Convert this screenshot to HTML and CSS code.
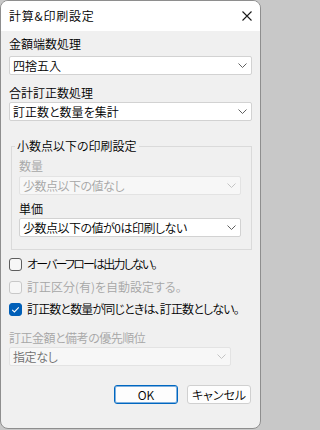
FILE: index.html
```html
<!DOCTYPE html>
<html lang="ja">
<head>
<meta charset="utf-8">
<link rel="stylesheet" href="styles.css">
</head>
<body>
<div class="window">
  <div class="titlebar">
    <span class="title">計算&amp;印刷設定</span>
    <svg class="close" width="10" height="10" viewBox="0 0 10 10"><path d="M0.5 0.5 L9.5 9.5 M9.5 0.5 L0.5 9.5" stroke="#1a1a1a" stroke-width="1.1" fill="none"/></svg>
  </div>
  <div class="content">
    <div class="label first">金額端数処理</div>
    <div class="select tight"><span>四捨五入</span><svg class="chev" width="9" height="5" viewBox="0 0 9 5"><path d="M0.5 0.5 L4.5 4.5 L8.5 0.5" stroke="#606060" stroke-width="1" fill="none"/></svg></div>
    <div class="label second">合計訂正数処理</div>
    <div class="select near"><span>訂正数と数量を集計</span><svg class="chev" width="9" height="5" viewBox="0 0 9 5"><path d="M0.5 0.5 L4.5 4.5 L8.5 0.5" stroke="#606060" stroke-width="1" fill="none"/></svg></div>

    <fieldset class="group">
      <legend>小数点以下の印刷設定</legend>
      <div class="label disabled qty">数量</div>
      <div class="select off tight2"><span class="sq1">少数点以下の値なし</span><svg class="chev" width="9" height="5" viewBox="0 0 9 5"><path d="M0.5 0.5 L4.5 4.5 L8.5 0.5" stroke="#c4c4c4" stroke-width="1" fill="none"/></svg></div>
      <div class="label price">単価</div>
      <div class="select near"><span class="sq1">少数点以下の値が0は印刷しない</span><svg class="chev" width="9" height="5" viewBox="0 0 9 5"><path d="M0.5 0.5 L4.5 4.5 L8.5 0.5" stroke="#606060" stroke-width="1" fill="none"/></svg></div>
    </fieldset>

    <div class="checks">
      <div class="check"><span class="box"></span><span class="sq3">オーバーフローは出力しない。</span></div>
      <div class="check disabled second-row"><span class="box"></span><span>訂正区分(有)を自動設定する。</span></div>
      <div class="check"><span class="box checked"><svg width="13" height="13" viewBox="0 0 13 13"><path d="M3.2 6.8 L5.4 8.9 L9.8 4.4" stroke="#ffffff" stroke-width="1.1" fill="none"/></svg></span><span class="sq2">訂正数と数量が同じときは、訂正数としない。</span></div>
    </div>

    <div class="label disabled prio"><span class="sq1">訂正金額と備考の優先順位</span></div>
    <div class="select off narrow near"><span class="dim">指定なし</span><svg class="chev" width="9" height="5" viewBox="0 0 9 5"><path d="M0.5 0.5 L4.5 4.5 L8.5 0.5" stroke="#c4c4c4" stroke-width="1" fill="none"/></svg></div>

    <div class="buttons">
      <div class="btn default">OK</div>
      <div class="btn">キャンセル</div>
    </div>
  </div>
</div>
</body>
</html>
```
FILE: styles.css
```css
html, body {
  margin: 0;
  padding: 0;
}
body {
  background: #c8c8c8;
  font-family: "Noto Sans CJK JP", "Noto Sans", sans-serif;
  font-size: 12px;
  line-height: 16px;
  font-weight: 350;
  color: #000;
  font-feature-settings: "palt";
}
.window {
  width: 261px;
  height: 429px;
  box-sizing: border-box;
  border: 1px solid #8e8e8e;
  border-radius: 8px;
  background: #f0f0f0;
  overflow: hidden;
  display: flex;
  flex-direction: column;
}
.titlebar {
  height: 30px;
  flex: none;
  background: #ffffff;
  display: flex;
  align-items: center;
  justify-content: space-between;
  padding: 0 8px 0 8px;
}
.title {
  color: #000;
  letter-spacing: 0.8px;
}
.close {
  display: block;
}
.content {
  padding: 0 8px;
  display: flex;
  flex-direction: column;
}
.label {
  height: 16px;
  white-space: nowrap;
}
.label.first { margin-top: 5px; }
.label.second { margin-top: 10px; }
.label.disabled { color: #a6a6a6; }
.label.qty { margin-top: 4px; }
.label.price { margin-top: 6px; }
.label.prio { margin-top: 10px; }

.sq1 { letter-spacing: -0.5px; }
.sq2 { letter-spacing: -0.85px; }
.sq3 { letter-spacing: -1.8px; }

.select {
  height: 19px;
  box-sizing: border-box;
  background: #ffffff;
  border: 1px solid #d2d2d2;
  border-radius: 2px;
  display: flex;
  align-items: center;
  justify-content: space-between;
  padding: 0 4px 0 3px;
  white-space: nowrap;
}
.select.tight { margin-top: 4px; }
.select.tight2 { margin-top: 2px; }
.select.near { margin-top: 1px; }
.select.off {
  background: #f7f7f7;
  border-color: #e3e3e3;
  color: #a6a6a6;
}
.select .dim { color: #6f6f6f; letter-spacing: -0.4px; }
.select.narrow { width: 222px; }
.chev { display: block; flex: none; }

.group {
  margin: 17px 0 0 2px;
  padding: 0 10px 12px 7px;
  border: 1px solid #dadada;
  border-radius: 0;
  min-width: 0;
}
.group legend {
  padding: 0 2px;
  margin-left: -4px;
  line-height: 16px;
  height: 16px;
}

.checks {
  margin-top: 3px;
  display: flex;
  flex-direction: column;
}
.check {
  height: 22px;
  display: flex;
  align-items: center;
  gap: 5px;
  white-space: nowrap;
}
.check.second-row { margin-top: 1px; }
.check .box {
  width: 13px;
  height: 13px;
  box-sizing: border-box;
  border: 1px solid #5d5d5d;
  border-radius: 3px;
  background: #f7f7f7;
  flex: none;
  display: block;
}
.check .box svg { display: block; margin: -1px; }
.check.disabled { color: #a6a6a6; }
.check.disabled .box { border-color: #c8c8c8; background: #f6f6f6; }
.check .box.checked {
  background: #005fb8;
  border-color: #005fb8;
}

.buttons {
  margin-top: 19px;
  display: flex;
  justify-content: flex-end;
  gap: 9px;
  padding-right: 1px;
}
.btn {
  width: 64px;
  height: 19px;
  box-sizing: border-box;
  background: #fdfdfd;
  border: 1px solid #d0d0d0;
  border-radius: 3px;
  display: flex;
  align-items: center;
  justify-content: center;
}
.btn.default {
  border-color: #0067c0;
  box-shadow: inset 0 0 0 1px #7fb0df;
}
```
